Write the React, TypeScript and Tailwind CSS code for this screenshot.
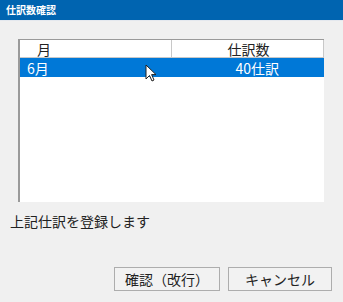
import React from "react";

export default function App() {
  const font = { fontFamily: '"Noto Sans CJK JP", "Noto Sans", sans-serif' };
  return (
    <div className="w-[343px] h-[302px] bg-[#f0f0f0] flex flex-col overflow-hidden relative" style={font}>
      <div className="h-[20px] bg-[#0064b0] text-white text-[10px] font-bold flex items-center pl-[6px] leading-none">
        仕訳数確認
      </div>
      <div className="h-px bg-[#e4e8ee]" />
      <div className="ml-[18px] mt-[18px] w-[306px] h-[163px] bg-white border-l-2 border-t border-[#9a9a9a] flex flex-col">
        <div className="h-[18px] flex text-[14px] text-[#222] leading-none border-b border-[#c8c8c8]">
          <div className="w-[152px] border-r border-[#c8c8c8] pl-[17px] flex items-center">月</div>
          <div className="flex-1 flex items-center justify-center pl-[2px] border-r border-[#c8c8c8]">仕訳数</div>
        </div>
        <div className="h-[19px] bg-[#0078d7] flex text-[14px] text-white leading-none">
          <div className="w-[152px] pl-[7px] flex items-center">6月</div>
          <div className="flex-1 flex items-center justify-end pr-[45px]">40仕訳</div>
        </div>
      </div>
      <div className="ml-[10px] mt-[10px] text-[14px] text-[#222] leading-[18px]">上記仕訳を登録します</div>
      <div className="flex justify-end gap-[8px] mt-[37px] pr-[11px]">
        <button className="w-[106px] h-[24px] bg-[#f2f2f2] border border-[#adadad] text-[14px] text-[#222] flex items-center justify-center leading-none">
          確認（改行）
        </button>
        <button className="w-[104px] h-[24px] bg-[#f2f2f2] border border-[#adadad] text-[14px] text-[#222] flex items-center justify-center leading-none">
          キャンセル
        </button>
      </div>
      <svg className="absolute left-[145px] top-[64px]" width="12" height="18" viewBox="0 0 12 18">
        <path d="M1 1 L1 15 L4.5 11.5 L7 17 L9 16 L6.6 10.6 L11 10.6 Z" fill="white" stroke="#222" strokeWidth="1" strokeLinejoin="round" />
      </svg>
    </div>
  );
}
